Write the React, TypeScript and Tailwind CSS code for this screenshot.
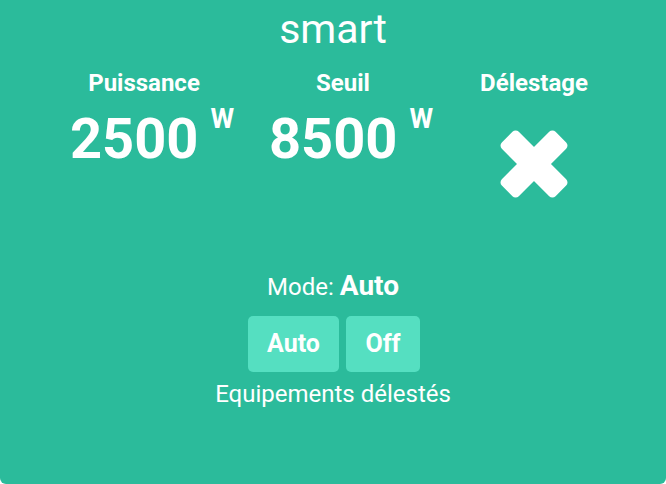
import React from "react";

function CrossIcon() {
  return (
    <svg width="68" height="68" viewBox="0 0 68 68" overflow="visible" aria-hidden="true">
      <g transform="rotate(45 34 34)" fill="#ffffff">
        <rect x="-4" y="22" width="76" height="24" rx="4.5" />
        <rect x="22" y="-4" width="24" height="76" rx="4.5" />
      </g>
    </svg>
  );
}

function Reading({ label, value }: { label: string; value: string }) {
  return (
    <div className="flex flex-col items-center">
      <div className="text-[24px] font-bold leading-[28px]">{label}</div>
      <div className="mt-[14px] flex items-start pl-[16px]">
        <span className="text-[56px] font-bold leading-[56px]">{value}</span>
        <span className="ml-[12px] mt-[-5px] text-[27px] font-bold leading-[27px]">W</span>
      </div>
    </div>
  );
}

export default function App() {
  return (
    <div className="min-h-screen bg-white font-['Roboto',sans-serif]">
      <div className="flex h-[484px] w-[666px] flex-col items-center rounded-b-[6px] bg-[#2bbb9b] text-white">
        <h1 className="pt-[9px] text-[41px] leading-[40px]">smart</h1>

        <div className="mt-[20px] flex w-full pl-[44px]">
          <div className="w-[200px]">
            <Reading label="Puissance" value="2500" />
          </div>
          <div className="w-[198px]">
            <Reading label="Seuil" value="8500" />
          </div>
          <div className="flex w-[184px] flex-col items-center">
            <div className="text-[24px] font-bold leading-[28px]">Délestage</div>
            <div className="mt-[33px]">
              <CrossIcon />
            </div>
          </div>
        </div>

        <div className="mt-[73px] flex items-baseline gap-[6px] leading-[30px]">
          <span className="text-[24px]">Mode:</span>
          <span className="text-[28px] font-bold">Auto</span>
        </div>

        <div className="mt-[14px] flex gap-[7px] pl-[2px]">
          <button className="h-[56px] w-[91px] rounded-[5px] bg-[#55dfc1] text-[25px] font-bold text-white">
            Auto
          </button>
          <button className="h-[56px] w-[74px] rounded-[5px] bg-[#55dfc1] text-[25px] font-bold text-white">
            Off
          </button>
        </div>

        <div className="mt-[9px] text-[24px] leading-[26px]">Equipements délestés</div>
      </div>
    </div>
  );
}
